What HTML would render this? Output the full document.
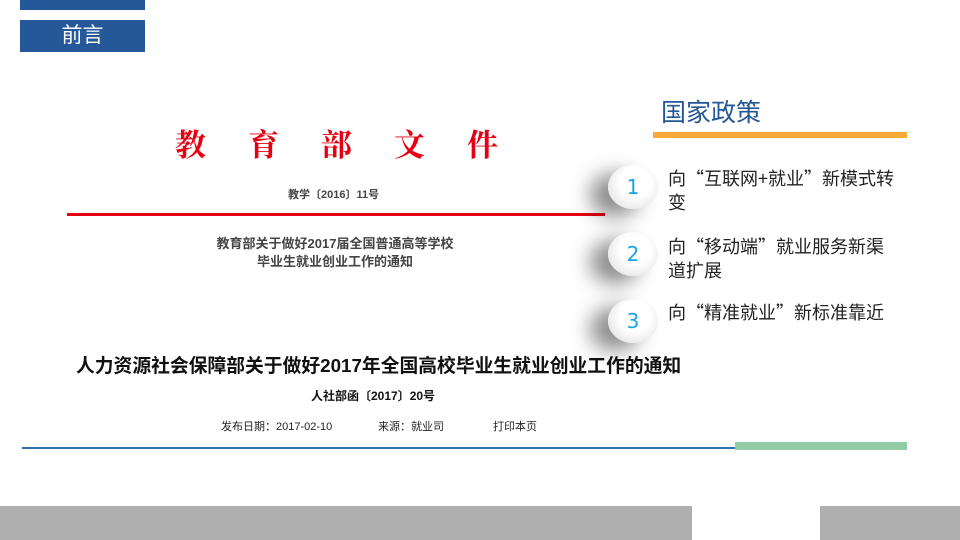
<!DOCTYPE html><html><head><meta charset="utf-8"><style>
body{margin:0;width:960px;height:540px;position:relative;background:#fff;overflow:hidden;font-family:"Liberation Sans","Noto Sans CJK SC",sans-serif}
.a{position:absolute;white-space:nowrap}
.c{position:absolute;width:50px;height:44px;border-radius:50%;background:radial-gradient(ellipse at 55% 40%,#fff 40%,#e8e8e8 75%,#d0d0d0);box-shadow:-18px 8px 20px rgba(0,0,0,.45);color:#1aa3e6;font-size:20px;text-align:center;line-height:44px;font-family:"DejaVu Sans",sans-serif}
.t{position:absolute;left:668px;font-size:18px;color:#222;line-height:24px;width:228px;font-family:"Noto Sans CJK SC",sans-serif}
</style></head><body>
<div class="a" style="left:20px;top:0;width:125px;height:10px;background:#245898"></div>
<div class="a" style="left:20px;top:20px;width:125px;height:32px;background:#245898;color:#fff;font-size:21px;line-height:32px;text-align:center">前言</div>
<div class="a" style="left:661px;top:93px;font-size:25px;color:#245898">国家政策</div>
<div class="a" style="left:653px;top:132px;width:254px;height:6px;background:#f9a93a"></div>
<div class="a" style="left:175px;top:120px;font-family:'Liberation Serif','Noto Serif CJK SC',serif;font-size:31px;font-weight:bold;color:#e60012;letter-spacing:42px">教育部文件</div>
<div class="a" style="left:288px;top:186px;font-size:11px;color:#444;font-weight:bold">教学〔2016〕11号</div>
<div class="a" style="left:67px;top:213px;width:538px;height:3px;background:#e60012"></div>
<div class="a" style="left:200px;top:235px;width:270px;text-align:center;font-size:13px;color:#444;font-weight:bold;line-height:18px">教育部关于做好2017届全国普通高等学校<br>毕业生就业创业工作的通知</div>
<div class="a" style="left:76px;top:351px;font-size:18.8px;font-weight:bold;color:#111">人力资源社会保障部关于做好2017年全国高校毕业生就业创业工作的通知</div>
<div class="a" style="left:311px;top:387px;font-size:12px;font-weight:bold;color:#111">人社部函〔2017〕20号</div>
<div class="a" style="left:221px;top:418px;font-size:11px;color:#222">发布日期：2017-02-10</div>
<div class="a" style="left:378px;top:418px;font-size:11px;color:#222">来源：就业司</div>
<div class="a" style="left:493px;top:418px;font-size:11px;color:#222">打印本页</div>
<div class="a" style="left:22px;top:447px;width:713px;height:2px;background:#2e6fb2"></div>
<div class="a" style="left:735px;top:442px;width:172px;height:8px;background:#93cba6"></div>
<div class="c" style="left:608px;top:165px">1</div>
<div class="c" style="left:608px;top:232px">2</div>
<div class="c" style="left:608px;top:299px">3</div>
<div class="t" style="top:166px">向“互联网+就业”新模式转变</div>
<div class="t" style="top:234px">向“移动端”就业服务新渠道扩展</div>
<div class="t" style="top:300px">向“精准就业”新标准靠近</div>
<div class="a" style="left:0;top:506px;width:692px;height:34px;background:#afafaf"></div>
<div class="a" style="left:820px;top:506px;width:140px;height:34px;background:#afafaf"></div>
</body></html>
